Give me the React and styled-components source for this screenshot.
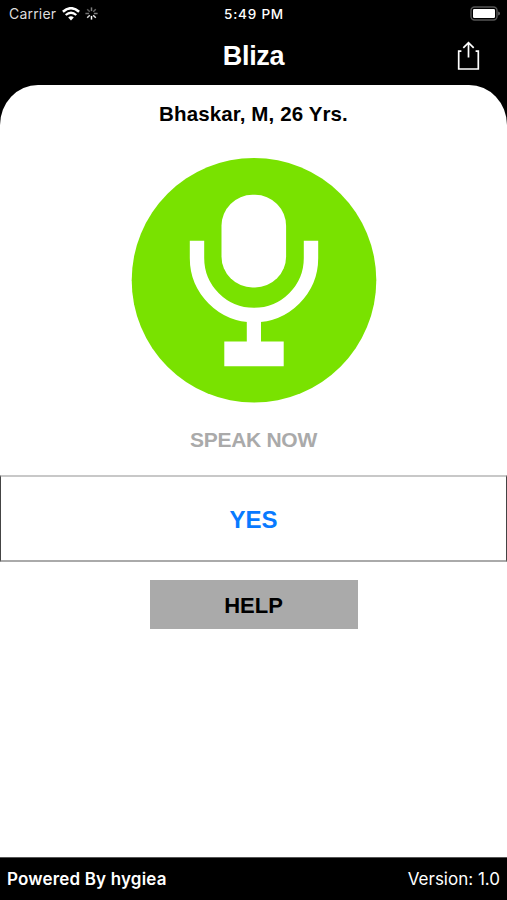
import styled, { createGlobalStyle } from 'styled-components';

const GlobalStyle = createGlobalStyle`
  * { box-sizing: border-box; }
  body { margin: 0; background: #000; }
`

function WifiIcon() {
    return (<svg width="18" height="14" viewBox="0 0 18 14">
        <path d="M0.9 4.8 Q9 -2.4 17.1 4.8" fill="none" stroke="#fff" strokeWidth="2.5" />
        <path d="M3.7 8 Q9 3.4 14.3 8" fill="none" stroke="#fff" strokeWidth="2.3" />
        <path d="M6.2 10.4 Q9 8 11.8 10.4 L9 13.4 Z" fill="#fff" />
    </svg>);
}

const spokes = [0.5, 0.4, 0.5, 0.9, 1, 0.85, 0.45, 0.35];

function Spinner() {
    return (<svg width="13" height="13" viewBox="0 0 13 13">
        {spokes.map((opacity, i) => (
            <line
              key={i}
              x1="6.5" y1="0.4" x2="6.5" y2="4.1"
              stroke="#fff" strokeWidth="1.5" opacity={opacity}
              transform={`rotate(${i * 45} 6.5 6.5)`}
            />
        ))}
    </svg>);
}

function BatteryIcon() {
    return (<svg width="31" height="16" viewBox="0 0 31 16">
        <rect x="1" y="1" width="26" height="13" rx="3.5" fill="none" stroke="#555" strokeWidth="1.4" />
        <rect x="3" y="3" width="22" height="9" rx="1.2" fill="#fff" />
        <path d="M28.2 5.5 Q30 6.2 30 7.5 Q30 8.8 28.2 9.5 Z" fill="#666" />
    </svg>);
}

function ShareIcon() {
    return (<svg width="23" height="30" viewBox="0 0 23 30" fill="none" stroke="#fff" strokeWidth="1.7">
        <path d="M4.4 10.2 H1.7 V28 H21.3 V10.2 H18.6" />
        <path d="M11.5 16.5 V1.8 M6.3 6.9 L11.5 1.6 L16.7 6.9" />
    </svg>);
}

function MicIcon() {
    return (<svg width="246" height="246" viewBox="131 157 246 246">
        <circle cx="254" cy="280.3" r="122.3" fill="#79e200" />
        <rect x="221.5" y="194.8" width="64.6" height="92.6" rx="31" fill="#fff" />
        <path d="M197 240.7 V258 A57 57 0 0 0 311 258 V240.7" fill="none" stroke="#fff" strokeWidth="14.4" />
        <path d="M246.8 319 H261 V341.6 H283.7 V366.3 H224.3 V341.6 H246.8 Z" fill="#fff" />
    </svg>);
}

function App() {
    return (<Screen>
        <GlobalStyle />
        <StatusBar>
            <Carrier>
                <CarrierName>Carrier</CarrierName>
                <WifiIcon />
                <Spinner />
            </Carrier>
            <Time>5:49 PM</Time>
            <Battery><BatteryIcon /></Battery>
        </StatusBar>
        <Header>
            <Title>Bliza</Title>
            <ShareButton aria-label="Share"><ShareIcon /></ShareButton>
        </Header>
        <Panel>
            <Patient>Bhaskar, M, 26 Yrs.</Patient>
            <MicButton aria-label="Speak"><MicIcon /></MicButton>
            <Prompt>SPEAK NOW</Prompt>
            <Answer>YES</Answer>
            <HelpButton>HELP</HelpButton>
        </Panel>
        <Footer>
            <Powered>Powered By hygiea</Powered>
            <Version>Version: 1.0</Version>
        </Footer>
    </Screen>);
}

export default App;


const Screen = styled.div`
  display: flex;
  flex-direction: column;
  height: 900px;
  background: #000;
  color: #fff;
  font-family: "Liberation Sans", Arial, sans-serif;
  white-space: nowrap;
`
const StatusBar = styled.div`
  display: grid;
  grid-template-columns: 1fr auto 1fr;
  align-items: center;
  height: 27px;
  padding: 0 6px 0 9px;
  font-family: Inter, sans-serif;
  font-size: 13.5px;
`
const Carrier = styled.div`
  display: flex;
  align-items: center;
  gap: 5px;
`
const CarrierName = styled.span`
  width: 48px;
  color: #ddd;
  font-size: 14px;
  letter-spacing: 0.2px;
`
const Time = styled.span`
  margin-right: 2px;
  font-weight: 500;
  letter-spacing: 0.8px;
`
const Battery = styled.div`
  display: flex;
  justify-content: flex-end;
`
const Header = styled.header`
  display: grid;
  grid-template-columns: 1fr auto 1fr;
  align-items: center;
  height: 58px;
  padding: 0 27px;
`
const Title = styled.h1`
  grid-column: 2;
  margin: 0;
  font-size: 27px;
  letter-spacing: -0.3px;
  line-height: 58px;
`
const ShareButton = styled.button`
  display: flex;
  justify-self: end;
  padding: 0;
  border: 0;
  background: none;
`
const Panel = styled.main`
  display: flex;
  flex-direction: column;
  align-items: center;
  height: 772px;
  padding-top: 15px;
  border-radius: 38px 38px 0 0 / 40px 40px 0 0;
  background: #fff;
  color: #000;
`
const Patient = styled.p`
  margin: 0;
  font-size: 20.5px;
  font-weight: bold;
  letter-spacing: 0.12px;
  line-height: 27px;
`
const MicButton = styled.button`
  display: flex;
  margin-top: 30px;
  padding: 0;
  border: 0;
  background: none;
`
const Prompt = styled.p`
  margin: 23px 0 0;
  color: #aaa;
  font-size: 21px;
  font-weight: bold;
  letter-spacing: -0.3px;
  line-height: 28px;
`
const Answer = styled.button`
  width: 100%;
  height: 87px;
  margin-top: 21px;
  padding: 3px 0 0;
  border: solid;
  border-width: 2px 1px;
  border-color: #c8c8c8 #444 #aaa;
  background: #fff;
  color: #087aff;
  font: bold 24px "Liberation Sans", Arial, sans-serif;
`
const HelpButton = styled.button`
  width: 208px;
  height: 49px;
  margin-top: 18px;
  padding: 2px 0 0;
  border: 0;
  background: #aaa;
  color: #000;
  font: bold 22px "Liberation Sans", Arial, sans-serif;
`
const Footer = styled.footer`
  display: flex;
  justify-content: space-between;
  align-items: center;
  height: 43px;
  padding: 0 7px;
  border-top: 1px solid #555;
  font-family: Inter, sans-serif;
  font-size: 17px;
`
const Powered = styled.span`
  font-weight: 600;
  letter-spacing: 0.17px;
`
const Version = styled.span`
  font-weight: 400;
`
